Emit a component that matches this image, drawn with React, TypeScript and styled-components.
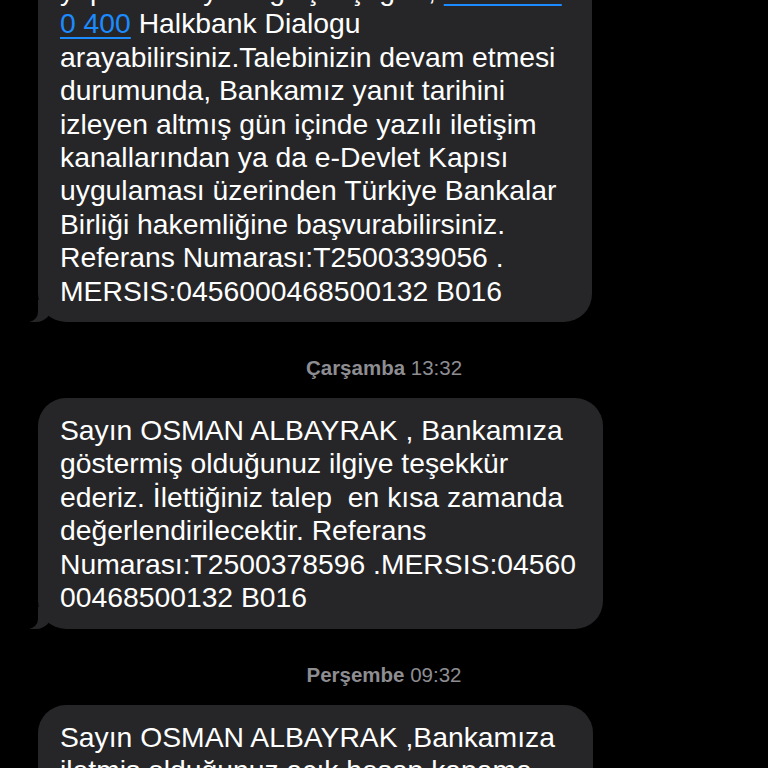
import React from 'react'
import styled, { createGlobalStyle } from 'styled-components'

const GlobalStyle = createGlobalStyle`
  html, body {
    margin: 0;
    padding: 0;
    background: #000;
  }
  body {
    font-family: 'Liberation Sans', Arial, sans-serif;
  }
`

const Screen = styled.div`
  width: 768px;
  height: 768px;
  overflow: hidden;
  background: #000;
`

const Thread = styled.div`
  display: flex;
  flex-direction: column;
  align-items: flex-start;
  margin-top: -42px;
  padding-left: 38px;
`

const Bubble = styled.div<{ $width: number }>`
  position: relative;
  box-sizing: border-box;
  width: ${p => p.$width}px;
  padding: 16px 0 14px 22px;
  background: #262628;
  border-radius: 28px;
  color: #fff;
  font-size: 28.3px;
  line-height: 33.4px;

  &::before {
    content: '';
    position: absolute;
    bottom: 0;
    left: -8px;
    width: 22px;
    height: 22px;
    background: #262628;
    border-bottom-right-radius: 16px;
  }
  &::after {
    content: '';
    position: absolute;
    bottom: 0;
    left: -14px;
    width: 14px;
    height: 22px;
    background: #000;
    border-bottom-right-radius: 10px;
  }
`

const Line = styled.span`
  display: block;
  white-space: pre;
`

const Link = styled.span`
  color: #1b8bff;
  text-decoration: underline;
  text-decoration-thickness: 2px;
  text-underline-offset: 4px;
`

const Stamp = styled.div`
  align-self: stretch;
  margin: 34px 38px 18px 0;
  text-align: center;
  font-size: 20.5px;
  line-height: 24px;
  color: #8d8d92;
`

const Day = styled.span`
  font-weight: 700;
`

const first = [
  'arayabilirsiniz.Talebinizin devam etmesi',
  'durumunda, Bankamız yanıt tarihini',
  'izleyen altmış gün içinde yazılı iletişim',
  'kanallarından ya da e-Devlet Kapısı',
  'uygulaması üzerinden Türkiye Bankalar',
  'Birliği hakemliğine başvurabilirsiniz.',
  'Referans Numarası:T2500339056 .',
  'MERSIS:0456000468500132 B016'
]

const second = [
  'Sayın OSMAN ALBAYRAK , Bankamıza',
  'göstermiş olduğunuz ilgiye teşekkür',
  'ederiz. İlettiğiniz talep  en kısa zamanda',
  'değerlendirilecektir. Referans',
  'Numarası:T2500378596 .MERSIS:04560',
  '00468500132 B016'
]

const third = [
  'Sayın OSMAN ALBAYRAK ,Bankamıza',
  'iletmiş olduğunuz açık hesap kapama',
  'talebiniz alınmıştır.'
]

export default function App() {
  return (
    <Screen>
      <GlobalStyle />
      <Thread>
        <Bubble $width={554}>
          <Line>
            yapabilir veya bilgi için çağrın, <Link>0850 222</Link>
          </Line>
          <Line>
            <Link>0 400</Link> Halkbank Dialogu
          </Line>
          {first.map(l => (
            <Line key={l}>{l}</Line>
          ))}
        </Bubble>

        <Stamp>
          <Day>Çarşamba</Day> 13:32
        </Stamp>

        <Bubble $width={565}>
          {second.map(l => (
            <Line key={l}>{l}</Line>
          ))}
        </Bubble>

        <Stamp>
          <Day>Perşembe</Day> 09:32
        </Stamp>

        <Bubble $width={555}>
          {third.map(l => (
            <Line key={l}>{l}</Line>
          ))}
        </Bubble>
      </Thread>
    </Screen>
  )
}
